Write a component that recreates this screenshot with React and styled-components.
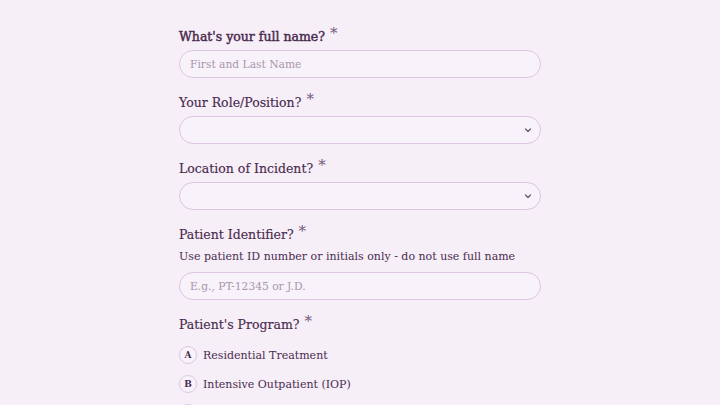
import React from 'react';
import styled, { createGlobalStyle } from 'styled-components';

const GlobalStyle = createGlobalStyle`
  html, body {
    margin: 0;
    padding: 0;
    background: #f6eff8;
  }
  body {
    font-family: 'DejaVu Serif', 'Liberation Serif', serif;
    color: #4a2b4f;
  }
`;

const Page = styled.div`
  width: 720px;
  height: 405px;
  overflow: hidden;
  display: flex;
  justify-content: center;
`;

const Form = styled.form`
  width: 362px;
  padding-top: 28px;
  display: flex;
  flex-direction: column;
`;

const Question = styled.div`
  display: flex;
  flex-direction: column;
  margin-bottom: 16px;
`;

const Label = styled.label`
  font-size: 12.5px;
  line-height: 18px;
  height: 18px;
  font-weight: 400;
  color: #4a2b4f;
  margin-bottom: 4px;
  -webkit-text-stroke: ${props => (props.$strong ? '0.45px #4a2b4f' : '0.15px #4a2b4f')};
`;

const Star = styled.span`
  font-size: 15px;
  line-height: 0;
  font-weight: 400;
  color: #735a78;
  position: relative;
  top: -3px;
  margin-left: 5px;
  -webkit-text-stroke: 0;
`;

const Hint = styled.p`
  margin: 0 0 6px;
  font-size: 11px;
  line-height: 18px;
  color: #4a2b4f;
`;

const Field = styled.div`
  height: 28px;
  box-sizing: border-box;
  border: 1px solid #dcc6e4;
  border-radius: 14px;
  background: #f8f2fa;
  display: flex;
  align-items: center;
  justify-content: space-between;
  padding: 0 6px 0 10px;
`;

const Placeholder = styled.span`
  font-size: 10.7px;
  color: #a896ab;
`;

const Options = styled.div`
  display: flex;
  flex-direction: column;
  gap: 11px;
  padding-top: 8px;
`;

const Option = styled.div`
  display: flex;
  align-items: center;
  gap: 6px;
  height: 18px;
`;

const Key = styled.span`
  width: 18px;
  height: 18px;
  box-sizing: border-box;
  border: 1px solid #dcc6e4;
  border-radius: 50%;
  display: flex;
  align-items: center;
  justify-content: center;
  font-size: 9px;
  font-weight: 700;
  color: #4a2b4f;
  background: #f8f2fa;
`;

const OptionText = styled.span`
  font-size: 11px;
  color: #4a2b4f;
`;

const Chevron = () => (
  <svg width="12" height="12" viewBox="0 0 24 24" fill="none" stroke="#6b5a70" strokeWidth="2.6" strokeLinecap="round" strokeLinejoin="round">
    <path d="M7 10l5 5 5-5" />
  </svg>
);

const programs = [
  ['A', 'Residential Treatment'],
  ['B', 'Intensive Outpatient (IOP)'],
  ['C', 'Partial Hospitalization (PHP)'],
];

export default function App() {
  return (
    <Page>
      <GlobalStyle />
      <Form>
        <Question>
          <Label $strong>What's your full name?<Star>*</Star></Label>
          <Field><Placeholder>First and Last Name</Placeholder></Field>
        </Question>
        <Question>
          <Label>Your Role/Position?<Star>*</Star></Label>
          <Field><span /><Chevron /></Field>
        </Question>
        <Question>
          <Label>Location of Incident?<Star>*</Star></Label>
          <Field><span /><Chevron /></Field>
        </Question>
        <Question>
          <Label>Patient Identifier?<Star>*</Star></Label>
          <Hint>Use patient ID number or initials only - do not use full name</Hint>
          <Field><Placeholder>E.g., PT-12345 or J.D.</Placeholder></Field>
        </Question>
        <Question>
          <Label>Patient's Program?<Star>*</Star></Label>
          <Options>
            {programs.map(([k, t]) => (
              <Option key={k}>
                <Key>{k}</Key>
                <OptionText>{t}</OptionText>
              </Option>
            ))}
          </Options>
        </Question>
      </Form>
    </Page>
  );
}
